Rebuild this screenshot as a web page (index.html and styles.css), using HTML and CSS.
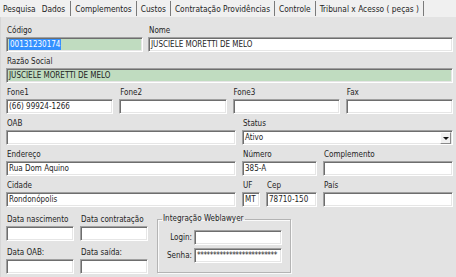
FILE: index.html
```html
<!DOCTYPE html>
<html lang="pt-BR">
<head>
<meta charset="utf-8">
<title>Dados</title>
<link rel="stylesheet" href="styles.css">
</head>
<body>
<div class="window">
  <div class="tabs">
    <span class="tab first">Pesquisa</span>
    <span class="tab active">Dados</span>
    <span class="tab">Complementos</span>
    <span class="tab">Custos</span>
    <span class="tab">Contratação Providências</span>
    <span class="tab">Controle</span>
    <span class="tab">Tribunal x Acesso ( peças )</span>
  </div>
  <div class="panel">
    <div class="row row-1">
      <div class="fg"><label>Código</label><div class="edit green"><span class="sel">00131230174</span></div></div>
      <div class="fg"><label>Nome</label><div class="edit">JUSCIELE MORETTI DE MELO</div></div>
    </div>
    <div class="row">
      <div class="fg"><label>Razão Social</label><div class="edit green">JUSCIELE MORETTI DE MELO</div></div>
    </div>
    <div class="row row-4">
      <div class="fg"><label>Fone1</label><div class="edit">(66) 99924-1266</div></div>
      <div class="fg"><label>Fone2</label><div class="edit"></div></div>
      <div class="fg"><label>Fone3</label><div class="edit"></div></div>
      <div class="fg"><label>Fax</label><div class="edit"></div></div>
    </div>
    <div class="row row-3">
      <div class="fg"><label>OAB</label><div class="edit"></div></div>
      <div class="fg span-2"><label>Status</label><div class="edit combo"><span class="combo-text">Ativo</span><span class="combo-btn"><span class="arrow"></span></span></div></div>
    </div>
    <div class="row row-3">
      <div class="fg"><label>Endereço</label><div class="edit">Rua Dom Aquino</div></div>
      <div class="fg"><label>Número</label><div class="edit">385-A</div></div>
      <div class="fg"><label>Complemento</label><div class="edit"></div></div>
    </div>
    <div class="row row-3">
      <div class="fg"><label>Cidade</label><div class="edit">Rondonópolis</div></div>
      <div class="pair">
        <div class="fg"><label>UF</label><div class="edit">MT</div></div>
        <div class="fg"><label>Cep</label><div class="edit">78710-150</div></div>
      </div>
      <div class="fg"><label>País</label><div class="edit"></div></div>
    </div>
    <div class="bottom">
      <div class="dates">
        <div class="fg"><label>Data nascimento</label><div class="edit"></div></div>
        <div class="fg"><label>Data contratação</label><div class="edit"></div></div>
        <div class="fg"><label>Data OAB:</label><div class="edit"></div></div>
        <div class="fg"><label>Data saída:</label><div class="edit"></div></div>
      </div>
      <fieldset class="group">
        <legend>Integração Weblawyer</legend>
        <div class="line"><span class="cap">Login:</span><div class="edit"></div></div>
        <div class="line"><span class="cap">Senha:</span><div class="edit pwd">*************************</div></div>
      </fieldset>
    </div>
  </div>
</div>
</body>
</html>
```
FILE: styles.css
```css
* { box-sizing: border-box; }
html, body { margin: 0; padding: 0; }
body {
  width: 456px;
  height: 277px;
  overflow: hidden;
  font-family: "DejaVu Sans Condensed", "DejaVu Sans", sans-serif;
  font-stretch: condensed;
  font-size: 8px;
  color: #1e1e1e;
  background: #e3e3e3;
}
.window {
  width: 456px;
  height: 277px;
  display: flex;
  flex-direction: column;
  background-image: linear-gradient(#6fa3d8, #6fa3d8);
  background-repeat: no-repeat;
  background-size: 1px 97px;
  background-position: 0 180px;
}
.tabs {
  height: 17px;
  background: #f0f0f0;
  display: flex;
  align-items: stretch;
  padding: 1px 0 0 0;
  font-size: 8.3px;
}
.tab {
  display: flex;
  align-items: center;
  padding: 0 4px 0 4px;
  border-right: 1px solid #7a7a7a;
  margin-bottom: 1px;
  white-space: nowrap;
}
.tab.first { padding: 0 3px 0 3px; border-right: none; }
.tab.active { padding: 0 5px 0 3px; }
.panel {
  flex: 1;
  background: #e3e3e3;
  border-left: 1px solid #d6d6d6;
  padding: 9px 3px 0 5px;
  display: flex;
  flex-direction: column;
  gap: 5px;
}
.row { display: grid; grid-template-columns: 1fr; column-gap: 6px; }
.row-1 { grid-template-columns: 137px 1fr; column-gap: 5px; }
.row-4 { grid-template-columns: repeat(4, 1fr); }
.row-3 { grid-template-columns: 230px 75px 1fr; }
.span-2 { grid-column: span 2; }
.pair { display: grid; grid-template-columns: 18px 1fr; column-gap: 6px; }
.fg { display: flex; flex-direction: column; min-width: 0; }
.fg label {
  display: block;
  height: 10px;
  line-height: 10px;
  padding-left: 1px;
  margin-bottom: 1px;
  white-space: nowrap;
}
.edit {
  height: 15px;
  background: #fff;
  border: 1px solid;
  border-color: #a0a0a0 #ffffff #ffffff #a0a0a0;
  box-shadow: inset 1px 1px 0 #6e6e6e, inset -1px -1px 0 #e6e6e6;
  padding: 0 2px 0 2px;
  line-height: 13px;
  white-space: nowrap;
  overflow: hidden;
}
.edit.green { background: #c0dcc0; }
.sel { background: #3390ff; color: #fff; display: inline-block; line-height: 11px; margin-top: 1px; padding: 0 1px; }
.combo { display: flex; align-items: stretch; padding-right: 1px; }
.combo-text { flex: 1; }
.combo-btn {
  width: 11px;
  margin: 1px 0 0 0;
  background: #f0f0f0;
  border: 1px solid;
  border-color: #fff #8a8a8a #8a8a8a #fff;
  display: flex;
  align-items: center;
  justify-content: center;
}
.arrow {
  width: 0; height: 0;
  border-left: 3px solid transparent;
  border-right: 3px solid transparent;
  border-top: 3px solid #111;
}
.bottom { display: flex; align-items: flex-start; gap: 9px; margin-top: 3px; }
.dates { display: grid; grid-template-columns: 68px 68px; column-gap: 6px; row-gap: 7px; width: 142px; }
.group {
  margin: -1px 0 0 0;
  width: 134px;
  padding: 6px 8px 9px 0;
  border: 1px solid #b4b4b4;
  box-shadow: inset 1px 1px 0 #fafafa, 1px 1px 0 #fafafa;
  min-width: 0;
}
.group legend {
  margin-left: 4px;
  padding: 0 1px;
  line-height: 10px;
  height: 10px;
}
.line { display: flex; align-items: center; gap: 2px; }
.line + .line { margin-top: 3px; }
.cap { width: 34px; text-align: right; }
.line .edit { flex: 1; }
.pwd { letter-spacing: -0.4px; font-size: 8px; }
```
